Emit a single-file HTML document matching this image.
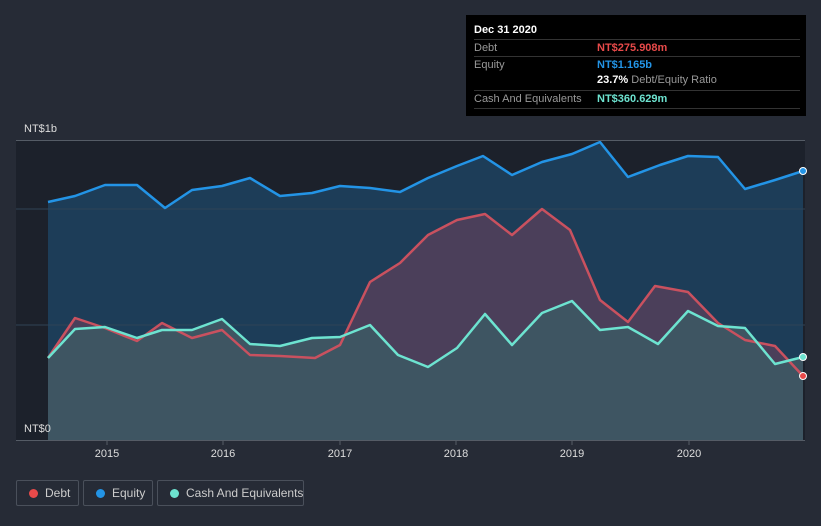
<!DOCTYPE html>
<html><head><style>
html,body{margin:0;width:821px;height:526px;overflow:hidden}
body{background:#262b36;font-family:"Liberation Sans",sans-serif;position:relative}
.tt{position:absolute;left:466px;top:15px;width:340px;height:101px;background:#000;color:#fff;font-size:11px}
.tt .r{position:absolute;left:8px;width:326px;border-top:1px solid #333;height:17px;line-height:17px}
.lab{color:#999}
.leg{position:absolute;top:480px;height:26px;border:1px solid #4a505b;border-radius:2px;color:#ccc;font-size:12px;line-height:24px;box-sizing:border-box;white-space:nowrap}
.leg i{position:absolute;left:12px;top:8px;width:9px;height:9px;border-radius:50%}
.leg span{position:absolute;left:28px}
</style></head><body>
<svg width="821" height="526" style="position:absolute;left:0;top:0">
<rect x="16" y="140" width="789" height="300" fill="#1c212b"/>
<polygon fill="#1d3d58" points="48,202 75,196 105,185 137,185 165,208 192,190 222,186 250,178 280,196 312,193 340,186 370,188 400,192 428,178 457,166 483,156 512,175 542,162 572,154 600,142 628,177 660,165 688,156 718,157 745,189 775,180 803,171 803,440 48,440"/>
<line x1="16" y1="209" x2="805" y2="209" stroke="#2f4456" stroke-width="1"/>
<line x1="16" y1="325" x2="805" y2="325" stroke="#2f4456" stroke-width="1"/>
<polygon fill="#4b3f5a" points="48,358 75,318 105,328 137,341 162,323 192,338 222,330 250,355 280,356 315,358 340,345 370,282 400,263 428,235 457,220 485,214 512,235 542,209 570,230 600,300 628,322 655,286 688,292 718,323 745,340 775,346 803,376 803,440 48,440"/>
<polygon fill="#3e5562" points="48,358 75,329 105,327 137,338 162,330 192,330 222,319 250,344 280,346 312,338 340,337 370,325 398,355 428,367 457,348 485,314 512,345 542,313 572,301 600,330 628,327 658,344 688,311 718,326 745,328 775,364 803,357 803,440 48,440"/>
<polyline fill="none" stroke="#2394e6" stroke-width="2.5" stroke-linejoin="round" points="48,202 75,196 105,185 137,185 165,208 192,190 222,186 250,178 280,196 312,193 340,186 370,188 400,192 428,178 457,166 483,156 512,175 542,162 572,154 600,142 628,177 660,165 688,156 718,157 745,189 775,180 803,171"/>
<polyline fill="none" stroke="#c9515f" stroke-width="2.5" stroke-linejoin="round" points="48,358 75,318 105,328 137,341 162,323 192,338 222,330 250,355 280,356 315,358 340,345 370,282 400,263 428,235 457,220 485,214 512,235 542,209 570,230 600,300 628,322 655,286 688,292 718,323 745,340 775,346 803,376"/>
<polyline fill="none" stroke="#6de3d0" stroke-width="2.5" stroke-linejoin="round" points="48,358 75,329 105,327 137,338 162,330 192,330 222,319 250,344 280,346 312,338 340,337 370,325 398,355 428,367 457,348 485,314 512,345 542,313 572,301 600,330 628,327 658,344 688,311 718,326 745,328 775,364 803,357"/>
<circle cx="803" cy="171" r="3.5" fill="#2394e6" stroke="#fff" stroke-width="1"/>
<circle cx="803" cy="376" r="3.5" fill="#e84a4a" stroke="#fff" stroke-width="1"/>
<circle cx="803" cy="357" r="3.5" fill="#6de3d0" stroke="#fff" stroke-width="1"/>
<line x1="16" y1="140.5" x2="805" y2="140.5" stroke="#555c66"/>
<line x1="16" y1="440.5" x2="805" y2="440.5" stroke="#555c66"/>
<g stroke="#555c66"><line x1="107" y1="440" x2="107" y2="445"/><line x1="223" y1="440" x2="223" y2="445"/><line x1="340" y1="440" x2="340" y2="445"/><line x1="456" y1="440" x2="456" y2="445"/><line x1="572" y1="440" x2="572" y2="445"/><line x1="689" y1="440" x2="689" y2="445"/></g>
<g fill="#ddd" font-size="11" font-family="Liberation Sans" text-anchor="middle"><text x="107" y="457">2015</text><text x="223" y="457">2016</text><text x="340" y="457">2017</text><text x="456" y="457">2018</text><text x="572" y="457">2019</text><text x="689" y="457">2020</text></g>
<text x="24" y="132" fill="#ddd" font-size="11">NT$1b</text>
<rect x="16" y="418" width="32" height="22" fill="#1c212b"/>
<text x="24" y="432" fill="#ddd" font-size="11">NT$0</text>
</svg>
<div class="tt">
<div style="position:absolute;left:8px;top:9px;font-weight:bold">Dec 31 2020</div>
<div class="r" style="top:24px"><span class="lab">Debt</span><span style="position:absolute;left:123px;color:#e84a4a;font-weight:bold">NT$275.908m</span></div>
<div class="r" style="top:41px"><span class="lab">Equity</span><span style="position:absolute;left:123px;color:#2394e6;font-weight:bold">NT$1.165b</span></div>
<div style="position:absolute;left:131px;top:59px"><b>23.7%</b> <span class="lab">Debt/Equity Ratio</span></div>
<div class="r" style="top:75px"><span class="lab">Cash And Equivalents</span><span style="position:absolute;left:123px;color:#6de3d0;font-weight:bold">NT$360.629m</span></div>
<div style="position:absolute;left:8px;top:93px;width:326px;border-top:1px solid #333"></div>
</div>
<div class="leg" style="left:16px;width:63px"><i style="background:#e84a4a"></i><span>Debt</span></div>
<div class="leg" style="left:83px;width:70px"><i style="background:#2394e6"></i><span>Equity</span></div>
<div class="leg" style="left:157px;width:147px"><i style="background:#6de3d0"></i><span>Cash And Equivalents</span></div>
</body></html>
